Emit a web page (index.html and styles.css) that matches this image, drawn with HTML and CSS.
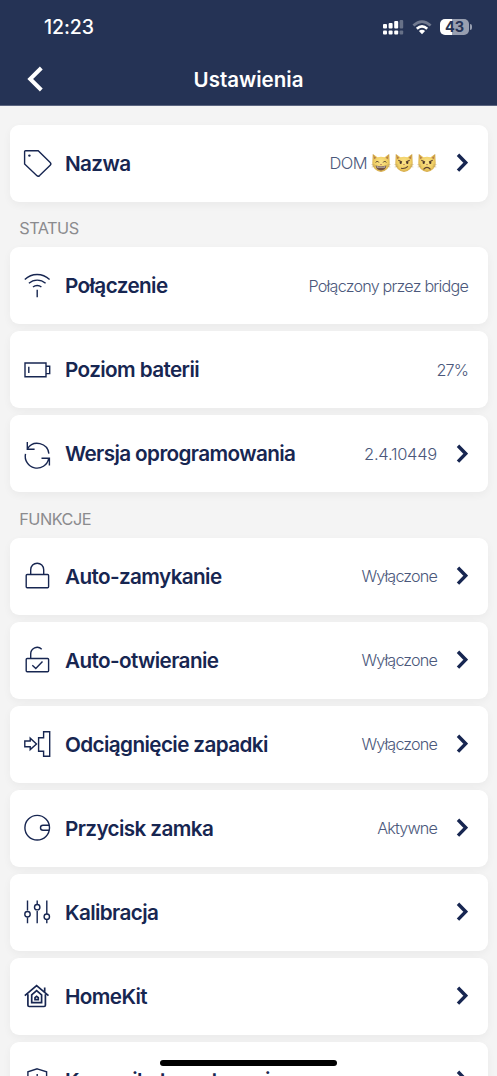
FILE: index.html
```
<!DOCTYPE html>
<html lang="pl">
<head>
<meta charset="utf-8">
<title>Ustawienia</title>
<link rel="stylesheet" href="styles.css">
</head>
<body>
<svg class="defs" width="0" height="0" aria-hidden="true">
  <defs>
    <radialGradient id="fur" cx=".5" cy=".45" r=".6"><stop offset="0" stop-color="#fbe48a"/><stop offset=".65" stop-color="#efcd62"/><stop offset="1" stop-color="#c99a3f"/></radialGradient>
    <symbol id="chevron" viewBox="0 0 14 20"><path d="M4 1.800 11.700 9.700 4 17.600" fill="none" stroke="currentColor" stroke-width="3.400"/></symbol>
    <symbol id="cat" viewBox="0 0 20 20">
      <path d="M1.800 1 1.300 10Q.8 13 3.800 16q3 3 6.200 3t6.200-3q3-3 2.500-6L18.200 1 13.500 4.200Q10 3.500 6.500 4.200Z" fill="url(#fur)"/>
      <path d="M2.900 3.300 3.100 6.200 5.600 4.700ZM17.100 3.300 16.900 6.200 14.400 4.700Z" fill="#b88048"/>
      <path d="M.5 11.500 4 12M.7 14 4.300 13.300M19.500 11.500 16 12M19.300 14 15.700 13.300" stroke="#b9a16b" stroke-width=".5"/>
      <path d="M9 11h2l-1 1.200z" fill="#aa6653"/>
    </symbol>
  </defs>
</svg>
<div class="screen">
  <header class="header">
    <div class="statusbar">
      <span class="time">12:23</span>
      <div class="indicators">
        <svg width="22" height="18" viewBox="0 0 22 18" fill="#fff"><rect x="1" y="6" width="4" height="4.400" rx="1"/><rect x="6.600" y="5" width="4" height="5.400" rx="1"/><rect x="12.200" y="3" width="4" height="7.400" rx="1"/><rect x="1" y="12.600" width="4" height="4" rx="1"/><rect x="6.600" y="12.600" width="4" height="4" rx="1"/><rect x="12.200" y="12.600" width="4" height="4" rx="1"/><g opacity=".3"><rect x="17.600" y="2" width="3.600" height="8.400" rx="1"/><rect x="17.600" y="12.600" width="3.600" height="4" rx="1"/></g></svg>
        <svg class="wifi" width="20" height="18" viewBox="0 0 20 18" fill="none" stroke="#fff"><path d="M1.400 7.600Q10 -.4 18.600 7.600" stroke-width="2.700" opacity=".35"/><path d="M4.800 10.700Q10 6.200 15.200 10.700" stroke-width="2.700"/><path d="M6.900 13Q10 10.600 13.100 13L10 16.300Z" fill="#fff" stroke="none"/></svg>
        <div class="battery"><span>43</span></div>
      </div>
    </div>
    <div class="navbar">
      <svg class="back" width="20" height="28" viewBox="0 0 20 28" fill="none" stroke="#fff" stroke-width="4"><path d="M17.300 2 6.200 13l11.100 11"/></svg>
      <h1 class="title">Ustawienia</h1>
    </div>
  </header>
  <main class="content">
    <section class="group">
      <div class="card">
        <svg class="icon" viewBox="0 0 32 32"><path d="M4.500 3.700H17.200L29.200 15.400Q30.600 16.800 29.200 18.200L18.600 28.600Q17.100 29.900 15.700 28.600L3.600 16.900V4.600Q3.600 3.700 4.500 3.700Z"/><circle class="solid" cx="8.400" cy="8.600" r="1.200"/></svg>
        <span class="label">Nazwa</span>
        <span class="value name"><span class="home-name">DOM</span>
          <svg class="emoji" viewBox="0 0 20 20"><use href="#cat"/><path d="M4.800 9.500Q6.300 6.500 7.800 9.500M12.200 9.500Q13.700 6.500 15.200 9.500" fill="none" stroke="#4f3b2c"/><path d="M4.500 12.600Q10 14 15.500 12.600 14.500 17.500 10 17.500T4.500 12.600Z" fill="#705044"/><path d="M5.600 13.200Q10 14.400 14.400 13.200L14 14.600H6Z" fill="#ddd"/></svg>
          <svg class="emoji" viewBox="0 0 20 20"><use href="#cat"/><path d="M4.300 7.200 8 9M15.700 7.200 12 9M7 15.300Q11 16 14 13.400" fill="none" stroke="#5c4231" stroke-width="1.100"/><ellipse cx="6.700" cy="9.800" rx="1.100" ry="1.300" fill="#493629"/><ellipse cx="13.300" cy="9.800" rx="1.100" ry="1.300" fill="#493629"/></svg>
          <svg class="emoji" viewBox="0 0 20 20"><use href="#cat"/><path d="M4.300 7.200 8 9M15.700 7.200 12 9M6.500 16.300Q10 12.600 13.500 16.300" fill="none" stroke="#5c4231" stroke-width="1.200"/><ellipse cx="6.700" cy="9.800" rx="1.100" ry="1.300" fill="#493629"/><ellipse cx="13.300" cy="9.800" rx="1.100" ry="1.300" fill="#493629"/></svg>
        </span>
        <svg class="chevron"><use href="#chevron"/></svg>
      </div>
    </section>
    <h2 class="heading">STATUS</h2>
    <section class="group">
      <div class="card">
        <svg class="icon" viewBox="0 0 32 32"><path d="M3.800 9.600Q9 4.500 16.100 4.500T28.600 9.600M7.900 13.300Q11.500 10.100 16.200 10.100T24.600 13.300M12 17Q13.800 15.500 16.200 15.500T20.400 17M16.200 19.700V27.300"/></svg>
        <span class="label">Połączenie</span><span class="value bridge">Połączony przez bridge</span>
      </div>
      <div class="card">
        <svg class="icon" viewBox="0 0 32 32"><path d="M4 9H25V22.700H4ZM25 12.200H28.700V19.600H25M7.800 12.800V19"/></svg>
        <span class="label">Poziom baterii</span><span class="value">27%</span>
      </div>
      <div class="card">
        <svg class="icon" viewBox="0 0 32 32"><path d="M6.300 4V11.200H13.600M6.500 10.600A11.700 11.700 0 0 1 27.900 15.600M28.400 27.600V20.200H20.500M27.600 20.800A11.700 11.700 0 0 1 4.500 15.800"/></svg>
        <span class="label">Wersja oprogramowania</span><span class="value number">2.4.10449</span><svg class="chevron"><use href="#chevron"/></svg>
      </div>
    </section>
    <h2 class="heading">FUNKCJE</h2>
    <section class="group">
      <div class="card">
        <svg class="icon" viewBox="0 0 32 32"><rect x="5.200" y="14.500" width="22.400" height="13.300" rx="1"/><path d="M9.700 14.500V9.700A6.500 6.500 0 0 1 22.700 9.700V14.500"/></svg>
        <span class="label">Auto-zamykanie</span><span class="value">Wyłączone</span><svg class="chevron"><use href="#chevron"/></svg>
      </div>
      <div class="card">
        <svg class="icon" viewBox="0 0 32 32"><rect x="5.200" y="14.500" width="22.400" height="13.300" rx="1"/><path d="M9.700 14.500V10A6.500 6.500 0 0 1 20.700 5.200M11.300 21.300 14.800 24.600 21.500 17.500"/></svg>
        <span class="label">Auto-otwieranie</span><span class="value">Wyłączone</span><svg class="chevron"><use href="#chevron"/></svg>
      </div>
      <div class="card">
        <svg class="icon" viewBox="0 0 32 32"><path d="M3.800 13H9.200V10.200L15.500 15.900 9.200 21.600V18.800H3.800ZM22.600 3.700H28.700V28.200H22.600V23.200H17.600V9.700H22.600Z"/></svg>
        <span class="label">Odciągnięcie zapadki</span><span class="value">Wyłączone</span><svg class="chevron"><use href="#chevron"/></svg>
      </div>
      <div class="card">
        <svg class="icon" viewBox="0 0 32 32"><circle cx="16.200" cy="15.700" r="12.300"/><path d="M28.300 13.200H22Q19.500 13.200 19.500 15.700T22 18.200H28.300"/></svg>
        <span class="label">Przycisk zamka</span><span class="value">Aktywne</span><svg class="chevron"><use href="#chevron"/></svg>
      </div>
      <div class="card">
        <svg class="icon" viewBox="0 0 32 32"><path d="M6.500 4.500V14.500M6.500 21.200V27.300M16.200 4.500V8.500M16.200 15V27.300M25.800 4.500V18M25.800 24V27.300"/><circle cx="6.500" cy="18.200" r="2.700"/><circle cx="16.200" cy="11.200" r="2.700"/><circle cx="25.800" cy="20.700" r="2.700"/></svg>
        <span class="label">Kalibracja</span><svg class="chevron"><use href="#chevron"/></svg>
      </div>
      <div class="card">
        <svg class="icon house" viewBox="0 0 32 32"><path d="M3.800 15.700 15.600 5.700 27.500 15.700M6.900 14.200V25.200Q6.900 26.500 8.200 26.500H23.100Q24.400 26.500 24.400 25.200V14.200M23.700 7.500V11.700M10.700 14.900 15.600 10.700 20.600 14.900V22.700H10.700ZM14 17.600 15.600 16.300 17.300 17.600V19.700H14Z"/></svg>
        <span class="label">HomeKit</span><svg class="chevron"><use href="#chevron"/></svg>
      </div>
      <div class="card">
        <svg class="icon" viewBox="0 0 32 32"><path d="M16.200 4.800 25.600 7.800V17Q25 24 16.200 28 7.500 24 6.900 17V7.800ZM16.200 10V17"/></svg>
        <span class="label">Komunikaty o otwarciu</span><svg class="chevron"><use href="#chevron"/></svg>
      </div>
    </section>
  </main>
  <div class="home-indicator"></div>
</div>
</body>
</html>
```
FILE: styles.css
```
* { box-sizing: border-box; }
body { margin: 0; font-family: Inter, "Noto Sans", sans-serif; background: #f4f4f4; color: #172651; }
.defs { position: absolute; }
.screen { position: relative; height: 1076px; overflow: hidden; }
.header { height: 106px; background: #253355; color: #fff; border-bottom: 1px solid #5b6580; }
.statusbar { height: 54px; padding: 0 26px 0 44px; display: flex; align-items: center; justify-content: space-between; }
.time { font-size: 19.5px; font-weight: 500; letter-spacing: -.1px; }
.indicators { display: flex; align-items: center; }
.wifi { margin: 0 8px 0 8px; }
.battery { position: relative; width: 29px; height: 16px; margin-right: 2px; border-radius: 5px; background: linear-gradient(90deg, #fff 43%, #989fb0 43%); color: #253355; font-size: 14.5px; font-weight: 700; line-height: 16px; text-align: center; }
.battery::after { content: ""; position: absolute; left: 30px; top: 5px; width: 2px; height: 6px; border-radius: 0 2px 2px 0; background: #989fb0; }
.navbar { height: 51px; display: grid; grid-template-columns: 82px 1fr 82px; align-items: center; }
.back { margin-left: 24px; }
.title { margin: 0; font-size: 20.5px; font-weight: 600; text-align: center; }
.content { padding: 18.5px 9.5px 0 9.7px; }
.group { display: flex; flex-direction: column; gap: 7px; }
.card { flex: none; height: 77px; display: flex; align-items: center; padding: 0 19.5px 0 11.3px; border-radius: 9px; background: #fff; box-shadow: 0 3px 9px rgba(0, 0, 0, .045); }
.icon { flex: none; width: 32px; height: 32px; margin-right: 12px; fill: none; stroke: #172651; stroke-width: 1.4; }
.icon .solid { fill: #172651; stroke: none; }
.house { stroke-width: 1.7; }
.label { font-size: 20.7px; font-weight: 600; letter-spacing: -.61px; white-space: nowrap; }
.value { margin-left: auto; font-size: 16.2px; font-weight: 300; letter-spacing: -.85px; color: #4b587b; white-space: nowrap; }
.bridge { letter-spacing: -.8px; }
.number { font-size: 16.5px; letter-spacing: -.25px; }
.name { display: flex; align-items: center; gap: 3px; }
.home-name { font-size: 16.5px; letter-spacing: -.6px; margin-right: 1px; }
.emoji { width: 20px; height: 20px; }
.chevron { flex: none; width: 14px; height: 20px; margin: 0 0 0 17px; color: #172651; }
.label + .chevron { margin-left: auto; }
.heading { margin: 0; height: 45.7px; padding-left: 9.5px; padding-top: 15.6px; font-size: 16.3px; line-height: 22px; font-weight: 400; color: #8b8b8e; letter-spacing: -.5px; }
.home-indicator { position: absolute; left: 160px; bottom: 10px; width: 177px; height: 6px; border-radius: 3px; background: #000; }
```
